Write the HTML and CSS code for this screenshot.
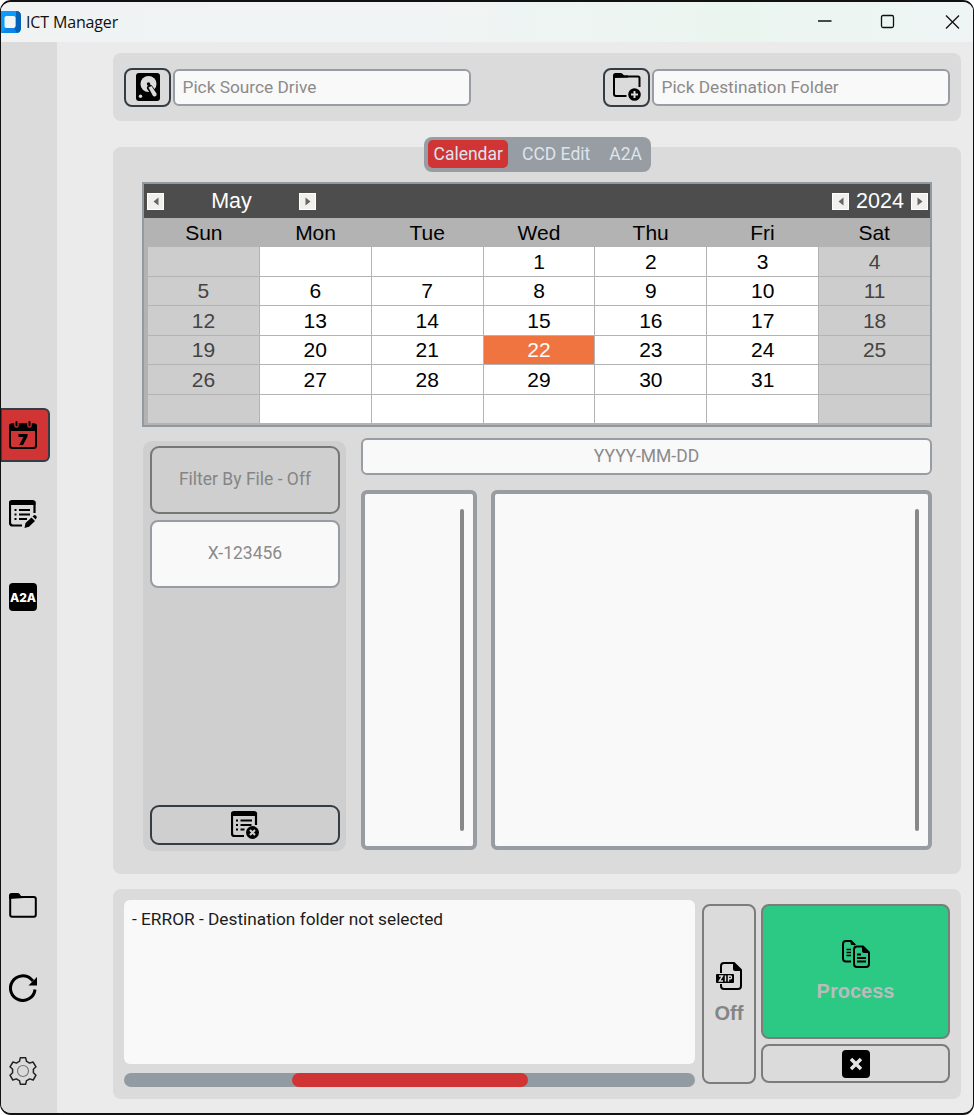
FILE: index.html
```html
<!DOCTYPE html>
<html lang="en">
<head>
<meta charset="utf-8">
<title>ICT Manager</title>
<link rel="stylesheet" href="styles.css">
</head>
<body>
<div class="window">
  <header class="titlebar">
    <svg class="logo" width="20" height="22" viewBox="0 0 20 22"><path d="M0 0h15q5 0 5 5v12q0 5-5 5H0z" fill="#0a9bff"/><path d="M15 0q5 0 5 5v12q0 5-5 5l-2-5 2-2V5z" fill="#0561b8"/><path d="M1 22l4-5h8l3 5z" fill="#0b84e8"/><rect x="3.500" y="5" width="11" height="12" rx="2" fill="#f1f5f5"/></svg>
    <h1 class="title">ICT Manager</h1>
    <svg class="winctl" width="144" height="16" viewBox="0 0 144 16" fill="none" stroke="#111" stroke-width="1.300"><path d="M1 7h13.500"/><rect x="64.500" y="1.500" width="12" height="12" rx="1.500"/><path d="M129 1.500l13 13M142 1.500l-13 13"/></svg>
  </header>
  <div class="body">
    <nav class="sidebar">
      <button class="side active"><svg width="28" height="28" viewBox="0 0 28 28"><rect x="1" y="3.500" width="26" height="23.500" rx="2.500" fill="none" stroke="#000" stroke-width="2"/><path d="M0 10V4.500Q0 2.500 2.500 2.500h23Q28 2.500 28 4.500V10z"/><path d="M7.500 0v4.500M20.500 0v4.500" stroke="#d13434" stroke-width="4.500" stroke-linecap="round"/><path d="M7.500 1v3.500M20.500 1v3.500" stroke="#000" stroke-width="2" stroke-linecap="round"/><path d="M9.500 13h9v2.500L14 24h-3.800l4.300-8h-5z"/></svg></button>
      <button class="side edit"><svg width="28" height="28" viewBox="0 0 28 28"><path d="M13 25.500H4Q1 25.500 1 22.500V2.500h24.500V13" fill="none" stroke="#000" stroke-width="2.200"/><path d="M0 5V3Q0 0 3 0h20.500q3 0 3 3v2z"/><path d="M5.500 10h2M10 10h11M5.500 14.500h2M10 14.500h11M5.500 19h2M10 19h8" stroke="#000" stroke-width="2"/><path d="M15.500 28l1-5 6-5.500 3.500 3.500-6 5.800zM23.500 16.500l1.500-1.200q1-.6 2.200.6t.2 2.200L26.800 19.500z"/></svg></button>
      <button class="side a2a"><svg width="28" height="28" viewBox="0 0 28 28"><rect width="28" height="28" rx="4"/><text class="badge-text" x="14" y="18.500">A2A</text></svg></button>
      <button class="side folder"><svg width="28" height="25" viewBox="0 0 28 25"><rect x="1.200" y="4" width="25.600" height="19.700" rx="2" fill="none" stroke="#000" stroke-width="2"/><path d="M0 6V2.500Q0 0 2.500 0H9q1.500 0 3 3h3v2z"/></svg></button>
      <button class="side reload"><svg width="28" height="28" viewBox="0 0 28 28"><path d="M26 15.500A12.300 12.300 0 1 1 22.500 5.500L24 7" fill="none" stroke="#000" stroke-width="3"/><path d="M28 3v8.500h-8.500z"/></svg></button>
      <button class="side gear"><svg width="28" height="28" viewBox="0 0 28 28" fill="none" stroke="#222" stroke-width="1.500" stroke-linejoin="round"><path d="M11.300 .8h5.400l.8 3.600q1.600.6 3 1.700L24 5l3 4.800-2.600 2.500v3.400L27 18.200 24.200 23l-3.600-1.100q-1.500 1.200-3.100 1.700l-.8 3.600h-5.400l-.8-3.600q-1.600-.5-3.100-1.700L3.800 23 1 18.200l2.600-2.500v-3.400L1 9.800 4 5l3.500 1.100q1.400-1.100 3-1.700z"/><circle cx="14" cy="14" r="5.500" stroke="#777" stroke-width="1.200"/></svg></button>
    </nav>
    <main class="content">
      <section class="panel paths">
        <button class="iconbtn"><svg width="24" height="28" viewBox="0 0 24 28"><rect width="24" height="28" rx="3"/><circle cx="12.500" cy="11" r="8" fill="#dbdbdb"/><path d="M14 15l6 8" stroke="#000" stroke-width="6" stroke-linecap="round"/><path d="M12.500 14.500l3-1.500 5 7.500q.6 2-1 2.800t-2.600-.5z" fill="#dbdbdb"/><circle cx="12.500" cy="11" r="1.700"/><circle cx="4.500" cy="23.300" r="1.700" fill="#dbdbdb"/></svg></button>
        <div class="entry source">Pick Source Drive</div>
        <button class="iconbtn"><svg width="28" height="28" viewBox="0 0 28 28"><path d="M13.500 23H3Q1 23 1 21V3.500h24q1.500 0 1.500 1.500v9" fill="none" stroke="#000" stroke-width="2"/><path d="M0 5V2.500Q0 0 2.500 0H8q1.500 0 3 2.500h4v2z"/><circle cx="21.500" cy="21.500" r="6.300"/><path d="M21.500 18v7M18 21.500h7" stroke="#dbdbdb" stroke-width="2"/></svg></button>
        <div class="entry">Pick Destination Folder</div>
      </section>
      <section class="panel main">
        <div class="tabs"><span class="tab selected">Calendar</span><span class="tab">CCD Edit</span><span class="tab">A2A</span></div>
        <div class="calendar">
          <div class="calhead">
            <svg class="arrow" width="17" height="17"><path d="M10.500 3.500v8l-5-4z"/></svg><span class="month">May</span><svg class="arrow" width="17" height="17"><path d="M5.500 3.500v8l5-4z"/></svg>
            <svg class="arrow prevyear" width="17" height="17"><path d="M10.500 3.500v8l-5-4z"/></svg><span class="year">2024</span><svg class="arrow" width="17" height="17"><path d="M5.500 3.500v8l5-4z"/></svg>
          </div>
          <div class="weekdays"><span>Sun</span><span>Mon</span><span>Tue</span><span>Wed</span><span>Thu</span><span>Fri</span><span>Sat</span></div>
          <div class="days">
            <span class="we"></span><span></span><span></span><span>1</span><span>2</span><span>3</span><span class="we">4</span>
            <span class="we">5</span><span>6</span><span>7</span><span>8</span><span>9</span><span>10</span><span class="we">11</span>
            <span class="we">12</span><span>13</span><span>14</span><span>15</span><span>16</span><span>17</span><span class="we">18</span>
            <span class="we">19</span><span>20</span><span>21</span><span class="today">22</span><span>23</span><span>24</span><span class="we">25</span>
            <span class="we">26</span><span>27</span><span>28</span><span>29</span><span>30</span><span>31</span><span class="we"></span>
            <span class="we"></span><span></span><span></span><span></span><span></span><span></span><span class="we"></span>
          </div>
        </div>
        <div class="lower">
          <aside class="filter">
            <button class="filterbtn">Filter By File - Off</button>
            <div class="entry number">X-123456</div>
            <button class="clear"><svg width="28" height="28" viewBox="0 0 28 28"><path d="M13 25H3.500Q1 25 1 22.500V2.500h24V14" fill="none" stroke="#000" stroke-width="2.200"/><path d="M0 5V3Q0 0 3 0h20q3 0 3 3v2z"/><path d="M5 9.500h2M9.500 9.500h11.500M5 14h2M9.500 14h11M5 18.500h2M9.500 18.500h4" stroke="#000" stroke-width="2"/><circle cx="21.500" cy="21.500" r="6.500"/><path d="M19 19l5 5M24 19l-5 5" stroke="#cfcfcf" stroke-width="2"/></svg></button>
          </aside>
          <div class="results">
            <div class="entry date">YYYY-MM-DD</div>
            <div class="lists"><div class="list"><i class="thumb"></i></div><div class="list"><i class="thumb"></i></div></div>
          </div>
        </div>
      </section>
      <section class="panel output">
        <div class="status">
          <div class="log">- ERROR - Destination folder not selected</div>
          <div class="progress"><div class="bar"></div></div>
        </div>
        <button class="action zip"><svg width="26" height="28" viewBox="0 0 26 28"><path d="M5 11V4q0-3 3-3h10l7 7v16q0 3-3 3H8q-3 0-3-3v-2" fill="none" stroke="#000" stroke-width="2"/><path d="M17 0l9 9h-7q-2 0-2-2z"/><rect y="12" width="18" height="9" rx="1"/><path d="M3 14h3.500L3.300 19H7M9.500 13.500v6M12.500 19.500V14h2q1 0 1 1.400t-1 1.400h-2" fill="none" stroke="#ddd" stroke-width="1.400"/></svg><span>Off</span></button>
        <div class="actions">
          <button class="action process"><svg width="28" height="28" viewBox="0 0 28 28"><path d="M9 21.500H4q-3 0-3-3V4q0-3 3-3h5l4 4" fill="none" stroke="#000" stroke-width="2"/><path d="M8 0l6 5H9z"/><path d="M4.500 9.500H9M4.500 12.500H9M4.500 15.500H9" stroke="#000" stroke-width="1.600"/><path d="M15 6.500h6l6 6V24q0 3-3 3h-9q-3 0-3-3V9.500q0-3 3-3z" fill="none" stroke="#000" stroke-width="2"/><path d="M20 6l8 7h-6q-2 0-2-2z"/><path d="M15 14.500h4M15 18h9M15 21.500h9" stroke="#000" stroke-width="1.800"/></svg><span>Process</span></button>
          <button class="action cancel"><svg width="28" height="28" viewBox="0 0 28 28"><rect width="28" height="28" rx="4"/><path d="M9 9l10 10M19 9L9 19" stroke="#e4e4e4" stroke-width="3.500"/></svg></button>
        </div>
      </section>
    </main>
  </div>
</div>
</body>
</html>
```

FILE: styles.css
```css
* { box-sizing: border-box; }
body { margin: 0; background: #fff; font: 17.500px Roboto, sans-serif; color: #1c1c1c; }
button { display: flex; align-items: center; justify-content: center; margin: 0; padding: 0; font: inherit; background: transparent; border: 0; }
svg { display: block; flex: none; }
.window { width: 974px; height: 1115px; border: 1px solid #111; border-top-width: 2px; border-bottom-width: 2px; border-radius: 11px; overflow: hidden; background: #ebebeb; }
.titlebar { height: 40px; display: flex; align-items: center; background: linear-gradient(90deg, #f1f3f3, #f0f4f4 45%, #ebf5f0 75%, #eff5f5); }
.title { margin: 0 0 0 5px; font: 16px "Open Sans", sans-serif; letter-spacing: -.15px; color: #111; }
.winctl { margin-left: auto; margin-right: 12px; }
.body { display: flex; height: 1071px; }
.sidebar { width: 56px; background: #dbdbdb; padding-top: 366px; display: flex; flex-direction: column; }
.side { width: 49px; height: 54px; padding-right: 6px; }
.side.active { width: 50px; margin-left: -1px; height: 54px; background: #d13434; border: 2px solid #343d44; border-radius: 0 6px 6px 0; padding-right: 4px; }
.side.edit { margin-top: 25px; }
.side.a2a { margin-top: 29px; }
.badge-text { font: 800 12px Inter, sans-serif; fill: #fff; text-anchor: middle; }
.side.folder { margin-top: 254px; }
.side.reload { margin-top: 29px; }
.side.gear { margin-top: 29px; }
.content { flex: 1; padding: 11px 11px 0 56px; }
.panel { background: #dbdbdb; border-radius: 8px; width: 848px; }
.paths { height: 68px; padding: 15px 11px; display: flex; align-items: center; font-size: 17.300px; }
.iconbtn { width: 47px; height: 39px; border: 2px solid #343d44; border-radius: 8px; margin-right: 2px; flex: none; }
.entry { flex: none; width: 298px; height: 37px; background: #f9f9f9; border: 2px solid #979da2; border-radius: 6px; padding: 0 7.500px; line-height: 32px; color: #8b8b8b; white-space: nowrap; }
.source { margin-right: 132px; }
.main { margin-top: 26px; height: 727px; padding: 0 29px; }
.tabs { width: 227px; height: 35px; position: relative; top: -10px; margin: 0 auto -10px 282px; padding: 3px 4px; background: #979da2; border-radius: 8px; display: flex; }
.tab { line-height: 28px; height: 28px; color: #dce4ee; padding: 0 8px; white-space: nowrap; }
.tab.selected { background: #d13434; border-radius: 5px; padding: 0 5.500px; margin-right: 6px; width: 80px; }
.tab + .tab + .tab { margin-left: 3px; }
.calendar { width: 790px; height: 245px; margin-top: 10px; border: 2px solid #92999f; background: #b3b3b3; font: 21px "Liberation Sans", sans-serif; }
.calhead { height: 34px; padding: 0 2px 0 3px; background: #4d4d4d; color: #fff; display: flex; align-items: center; font-size: 21.500px; }
.arrow { background: #f2f0ed; fill: #666; border: 1px solid #fff; }
.month { width: 135px; text-align: center; padding-top: 1px; }
.year { width: 62px; text-align: center; padding-top: 1px; }
.prevyear { margin-left: auto; }
.weekdays { height: 29px; display: grid; grid-template-columns: repeat(7, 1fr); padding-left: 4px; text-align: center; line-height: 29px; color: #000; }
.days { height: 177px; display: grid; grid-template: repeat(6, 1fr) / repeat(7, 1fr); gap: 1px; padding-left: 4px; padding-bottom: 1px; text-align: center; line-height: 28px; color: #000; }
.days span { background: #fff; padding-top: .500px; }
.days .we { background: #cdcdcd; color: #444; }
.days .today { background: #ef7440; color: #fff; }
.lower { display: flex; margin-top: 11px; gap: 15px; }
.filter { width: 203px; height: 410px; margin: 3px 0 0 1px; padding: 5px 6px 6px 7px; background: #cfcfcf; border-radius: 9px; display: flex; flex-direction: column; }
.filterbtn { height: 68px; border: 2px solid #777; border-radius: 9px; color: #858585; padding-bottom: 2px; }
.number { width: 190px; height: 68px; margin-top: 6px; text-align: center; line-height: 62px; border-radius: 8px; }
.clear { height: 40px; margin-top: auto; border: 2px solid #343d44; border-radius: 9px; }
.results { width: 571px; }
.date { width: 571px; height: 37px; text-align: center; line-height: 32px; }
.lists { display: flex; gap: 14px; margin-top: 15px; }
.list { width: 116px; height: 360px; padding: 15px 9px; background: #f9f9f9; border: 4px solid #979da2; border-radius: 6px; display: flex; justify-content: flex-end; }
.list + .list { width: 441px; }
.thumb { width: 4.500px; height: 322px; background: #888; border-radius: 3px; }
.output { height: 210px; margin-top: 15px; padding: 11px 11px; display: flex; }
.status { width: 571px; }
.log { height: 164px; padding: 8px 8px; background: #f9f9f9; border-radius: 6px; line-height: 23px; font-size: 17.280px; }
.progress { height: 14px; margin-top: 9px; background: #939ba2; border-radius: 7px; }
.bar { width: 236px; height: 14px; margin-left: 168px; background: #d13434; border-radius: 7px; }
.action { border: 2px solid #7c7c7c; border-radius: 8px; flex-direction: column; font: 700 20px/22px "Liberation Sans", sans-serif; gap: 12px; }
.zip { width: 54px; height: 180px; margin: 4px 5px 0 7px; color: #858585; padding-bottom: 3px; }
.actions { display: grid; gap: 5px; grid-template-rows: 135px 39px; width: 189px; margin-top: 4px; }
.process { background: #2cc985; color: #bbb; padding-bottom: 1px; }
```
